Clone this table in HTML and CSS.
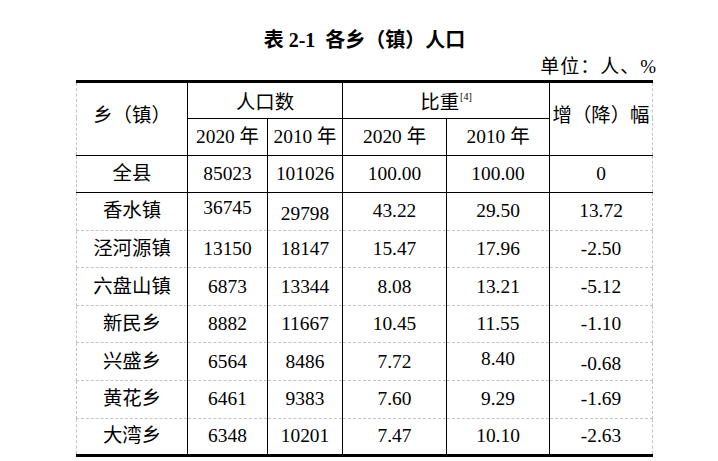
FILE: index.html
```html
<!DOCTYPE html>
<html lang="zh-CN">
<head>
<meta charset="utf-8">
<title>表 2-1 各乡（镇）人口</title>
<link rel="stylesheet" href="styles.css">
</head>
<body>
<div class="page">
  <h1 class="title">表 2-1&nbsp; 各乡（镇）人口</h1>
  <div class="unit">单位：人、%</div>
  <table class="data">
    <colgroup>
      <col class="c-name"><col class="c-p20"><col class="c-p10"><col class="c-r20"><col class="c-r10"><col class="c-chg">
    </colgroup>
    <thead>
      <tr class="h1">
        <th rowspan="2">乡（镇）</th>
        <th colspan="2" class="grp">人口数</th>
        <th colspan="2" class="grp">比重<sup>[4]</sup></th>
        <th rowspan="2">增（降）幅</th>
      </tr>
      <tr class="h2">
        <th>2020 年</th><th>2010 年</th><th>2020 年</th><th>2010 年</th>
      </tr>
    </thead>
    <tbody>
      <tr class="total"><td>全县</td><td>85023</td><td>101026</td><td>100.00</td><td>100.00</td><td>0</td></tr>
      <tr class="first"><td>香水镇</td><td class="up">36745</td><td class="dn">29798</td><td>43.22</td><td>29.50</td><td>13.72</td></tr>
      <tr><td>泾河源镇</td><td>13150</td><td>18147</td><td>15.47</td><td>17.96</td><td>-2.50</td></tr>
      <tr><td>六盘山镇</td><td>6873</td><td>13344</td><td>8.08</td><td>13.21</td><td>-5.12</td></tr>
      <tr><td>新民乡</td><td>8882</td><td>11667</td><td>10.45</td><td>11.55</td><td>-1.10</td></tr>
      <tr><td>兴盛乡</td><td>6564</td><td>8486</td><td>7.72</td><td class="up">8.40</td><td class="dn">-0.68</td></tr>
      <tr><td>黄花乡</td><td>6461</td><td>9383</td><td>7.60</td><td>9.29</td><td>-1.69</td></tr>
      <tr class="last"><td>大湾乡</td><td>6348</td><td>10201</td><td>7.47</td><td>10.10</td><td>-2.63</td></tr>
    </tbody>
  </table>
</div>
</body>
</html>
```

FILE: styles.css
```css
html, body {
  margin: 0;
  padding: 0;
  background: #ffffff;
}

body {
  font-family: "Liberation Serif", "Noto Sans CJK SC", serif;
  color: #000;
}

.page {
  width: 577px;
  margin-left: 76px;
  padding-top: 29px;
}

.title {
  margin: 0;
  font-size: 20px;
  line-height: 22px;
  font-weight: bold;
  text-align: center;
}

.unit {
  margin: 5px -4px 0 0;
  font-size: 19px;
  line-height: 22px;
  letter-spacing: 1px;
  text-align: right;
}

.data {
  margin-top: 2px;
  width: 577px;
  table-layout: fixed;
  border-collapse: collapse;
  border-top: 3px solid #000;
  border-bottom: 3px solid #000;
  border-left: 1px dashed #c4c4c4;
  border-right: 1px dashed #c4c4c4;
  font-size: 19.4px;
}

.c-name { width: 111px; }
.c-p20 { width: 80px; }
.c-p10 { width: 75px; }
.c-r20 { width: 104px; }
.c-r10 { width: 103px; }
.c-chg { width: 103px; }

.data th,
.data td {
  padding: 0;
  text-align: center;
  vertical-align: middle;
  font-weight: normal;
  white-space: nowrap;
  border-left: 1px solid #000;
  border-right: 1px solid #000;
  border-bottom: 1px dashed #c4c4c4;
  line-height: 22px;
}

.data th:first-child,
.data td:first-child {
  border-left: 1px dashed #c4c4c4;
}

.data th:last-child,
.data td:last-child {
  border-right: 1px dashed #c4c4c4;
}

.data .h1 { height: 36.5px; }
.data .h2 { height: 37px; }
.data tbody tr { height: 37.6px; }

.data thead th { border-bottom: 1px solid #000; }
.data .h1 .grp { padding-top: 5px; }
.data .h1 th[rowspan] { padding-bottom: 6px; }
.data .total td { border-bottom: 1px solid #000; }
.data .last td { border-bottom: none; }

.data sup {
  font-size: 10px;
  line-height: 0;
  vertical-align: 9px;
  margin-left: 1px;
}

.data .up { padding-bottom: 6px; }
.data .dn { padding-top: 5px; }
```
